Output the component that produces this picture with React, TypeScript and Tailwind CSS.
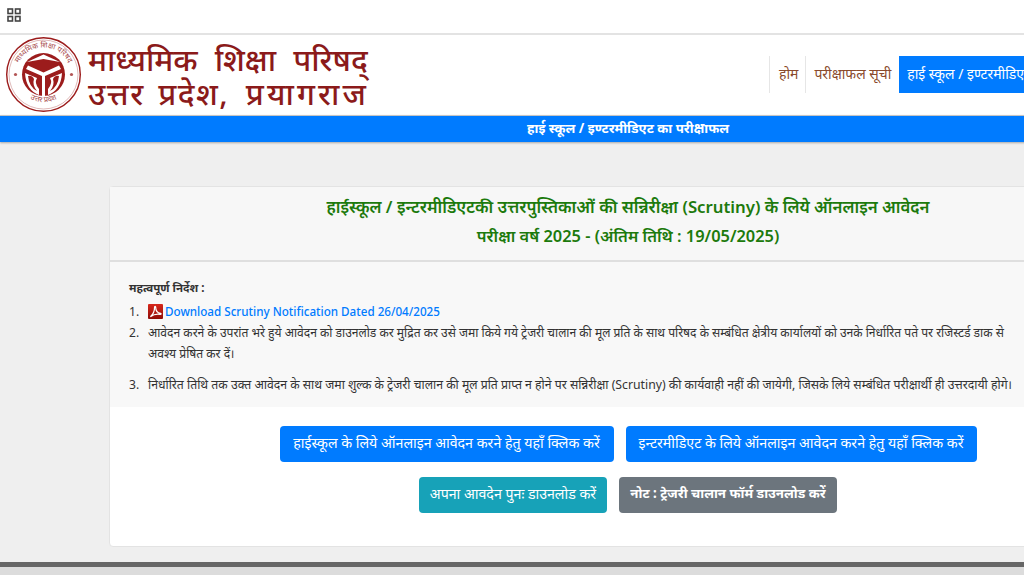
const sans = "font-['Noto_Sans','Noto_Sans_Devanagari','Open_Sans','DejaVu_Sans',sans-serif]";

function Emblem() {
  return (
    <svg viewBox="0 0 76 76" className="h-[76px] w-[76px] shrink-0">
      <circle cx="37.5" cy="37.5" r="36.8" fill="#fff" stroke="#9c1c1c" strokeWidth="1.4" />
      <circle cx="37.5" cy="37.5" r="34.5" fill="none" stroke="#c98a8a" strokeWidth="0.6" />
      <circle cx="37.5" cy="37.5" r="21.5" fill="#9c1c1c" />
      <path d="M21 25 L37.5 17.5 L54 25 L37.5 22 Z" fill="#fff" />
      <path d="M36 59 L36 39 L20 32 L22 28.5 L37.5 35.5 L53 28.5 L55 32 L39 39 L39 59 Z" fill="#fff" />
      <path d="M19 36 L31 41 Q28 46 33 52 L33 58 Q20 53 19 36 Z" fill="#fff" />
      <path d="M56 36 L44 41 Q47 46 42 52 L42 58 Q55 53 56 36 Z" fill="#fff" />
      <path d="M22 39 Q26 38 28 42 Q26 48 31 54 Q23 50 22 39 Z" fill="#9c1c1c" />
      <path d="M53 39 Q49 38 47 42 Q49 48 44 54 Q52 50 53 39 Z" fill="#9c1c1c" />
      <circle cx="9.5" cy="37.5" r="1.6" fill="#b35555" />
      <circle cx="65.5" cy="37.5" r="1.6" fill="#b35555" />
      <defs>
        <path id="topArc" d="M10 38 A27.5 27.5 0 0 1 65 38" />
        <path id="botArc" d="M14 52 A27.5 27.5 0 0 0 61 52" />
      </defs>
      <text fontSize="7.5" fill="#a84a4a">
        <textPath href="#topArc" startOffset="50%" textAnchor="middle">माध्यमिक शिक्षा परिषद</textPath>
      </text>
      <text fontSize="7.5" fill="#a84a4a">
        <textPath href="#botArc" startOffset="50%" textAnchor="middle">उत्तर प्रदेश</textPath>
      </text>
    </svg>
  );
}

function PdfIcon() {
  return (
    <svg viewBox="0 0 16 16" className="h-[15px] w-[15px] shrink-0">
      <defs>
        <linearGradient id="pdfBg" x1="0" y1="0" x2="0" y2="1">
          <stop offset="0" stopColor="#d8281c" />
          <stop offset="1" stopColor="#8f0d08" />
        </linearGradient>
      </defs>
      <rect width="16" height="16" rx="1" fill="url(#pdfBg)" />
      <path d="M2.5 13.5 C5 11.5 7 7 7 3.5 C7 2.2 8.2 2.2 8.2 3.5 C8.2 7 10 9.5 13.5 10 C14.2 10.2 14 11.2 13 11 C9 10.2 6 11 2.5 13.5 Z" fill="none" stroke="#fff" strokeWidth="1.3" />
    </svg>
  );
}

export default function App() {
  return (
    <div className={`h-[575px] w-[1024px] overflow-hidden bg-[#efefef] text-[#333] ${sans}`}>
      <div className="w-[1256px]">
        <div className="h-[35px] border-b-2 border-[#e3e3e3] bg-white pl-[7px] pt-[8px]">
          <svg viewBox="0 0 14 14" className="h-[14px] w-[14px] text-[#444]" fill="none" stroke="currentColor" strokeWidth="1.6">
            <rect x="1" y="1" width="4.5" height="4.5" />
            <rect x="8.5" y="1" width="4.5" height="4.5" />
            <rect x="1" y="8.5" width="4.5" height="4.5" />
            <rect x="8.5" y="8.5" width="4.5" height="4.5" />
          </svg>
        </div>

        <header className="flex h-[80px] items-center justify-between bg-white pl-[6px]">
          <div className="flex items-center gap-[6px]">
            <Emblem />
            <div className="mt-[1px] text-[31px] font-medium leading-[34px] text-[#8b1a1a]">
              <div className="whitespace-nowrap [word-spacing:9px]">माध्यमिक शिक्षा परिषद्</div>
              <div className="whitespace-nowrap tracking-[1.5px] [word-spacing:4px]">
                उत्तर प्रदेश, <span className="ml-[3px] tracking-[3.1px]">प्रयागराज</span>
              </div>
            </div>
          </div>
          <nav className="mb-[2px] mr-[144px] flex h-[37px] items-stretch text-[14px] text-[#8a4a2c]">
            <a className="flex items-center border-l border-[#e6e6e6] pb-[2px] pl-[9px] pr-[7px]">होम</a>
            <a className="flex items-center border-l border-[#e6e6e6] px-[8px] pb-[2px]">परीक्षाफल सूची</a>
            <a className="flex items-center bg-[#007bff] px-[8px] pb-[2px] text-white">हाई स्कूल / इण्टरमीडिएट का परीक्षाफल</a>
          </nav>
        </header>

        <div className="flex h-[27px] items-center justify-center border-t border-[#c4c4c4] bg-[#007bff] text-[13.3px] font-bold text-white shadow-[0_1px_2px_rgba(0,0,0,0.3)]">
          हाई स्कूल / इण्टरमीडिएट का परीक्षाफल
        </div>

        <main className="mx-auto mt-[44px] w-[1038px] rounded border border-[#e3e3e3] bg-white">
          <div className="flex h-[75px] flex-col items-center justify-center border-b-2 border-[#dfdfdf] bg-[#f7f7f7] pb-[5px] font-semibold leading-[29px] text-[#1c7a0c]">
            <div className="text-[16.8px]">हाईस्कूल / इन्टरमीडिएटकी उत्तरपुस्तिकाओं की सन्निरीक्षा (Scrutiny) के लिये ऑनलाइन आवेदन</div>
            <div className="text-[16.4px]">परीक्षा वर्ष 2025 - (अंतिम तिथि : 19/05/2025)</div>
          </div>

          <section className="h-[145px] bg-[#f8f8f8] pl-[19px] pt-[16px] text-[12.1px] leading-[20.5px] text-[#333]">
            <div className="mb-[3px] text-[11.5px] font-bold">महत्वपूर्ण निर्देश :</div>
            <ol className="w-[895px]">
              <li className="flex">
                <span className="w-[19px] shrink-0">1.</span>
                <span className="flex items-center gap-[2px] text-[11.65px] font-medium text-[#007bff]"><PdfIcon />Download Scrutiny Notification Dated 26/04/2025</span>
              </li>
              <li className="mb-[11px] flex leading-[21px]">
                <span className="w-[19px] shrink-0">2.</span>
                <span>आवेदन करने के उपरांत भरे हुये आवेदन को डाउनलोड कर मुद्रित कर उसे जमा किये गये ट्रेजरी चालान की मूल प्रति के साथ परिषद के सम्बंधित क्षेत्रीय कार्यालयों को उनके निर्धारित पते पर रजिस्टर्ड डाक से अवश्य प्रेषित कर दें।</span>
              </li>
              <li className="flex">
                <span className="w-[19px] shrink-0">3.</span>
                <span className="text-[12.25px]">निर्धारित तिथि तक उक्त आवेदन के साथ जमा शुल्क के ट्रेजरी चालान की मूल प्रति प्राप्त न होने पर सन्निरीक्षा (Scrutiny) की कार्यवाही नहीं की जायेगी, जिसके लिये सम्बंधित परीक्षार्थी ही उत्तरदायी होगे।</span>
              </li>
            </ol>
          </section>

          <div className="flex h-[139px] flex-col items-center gap-[15px] pt-[19px] text-[14.2px]">
            <div className="flex gap-[12px]">
              <button className="h-[36px] w-[334px] rounded bg-[#007bff] pb-[2px] text-white">हाईस्कूल के लिये ऑनलाइन आवेदन करने हेतु यहाँ क्लिक करें</button>
              <button className="h-[36px] w-[351px] rounded bg-[#007bff] pb-[2px] text-white">इन्टरमीडिएट के लिये ऑनलाइन आवेदन करने हेतु यहाँ क्लिक करें</button>
            </div>
            <div className="flex gap-[12px]">
              <button className="h-[36px] w-[188px] rounded bg-[#17a2b8] pb-[2px] text-white">अपना आवदेन पुनः डाउनलोड करें</button>
              <button className="h-[36px] w-[218px] rounded bg-[#6c757d] pb-[2px] text-[13.3px] font-bold text-white">नोट : ट्रेजरी चालान फॉर्म डाउनलोड करें</button>
            </div>
          </div>
        </main>

        <div className="mt-[15px] h-[5px] bg-[#666]" />
        <div className="h-[20px] bg-[#dcdcdc]" />
      </div>
    </div>
  );
}
